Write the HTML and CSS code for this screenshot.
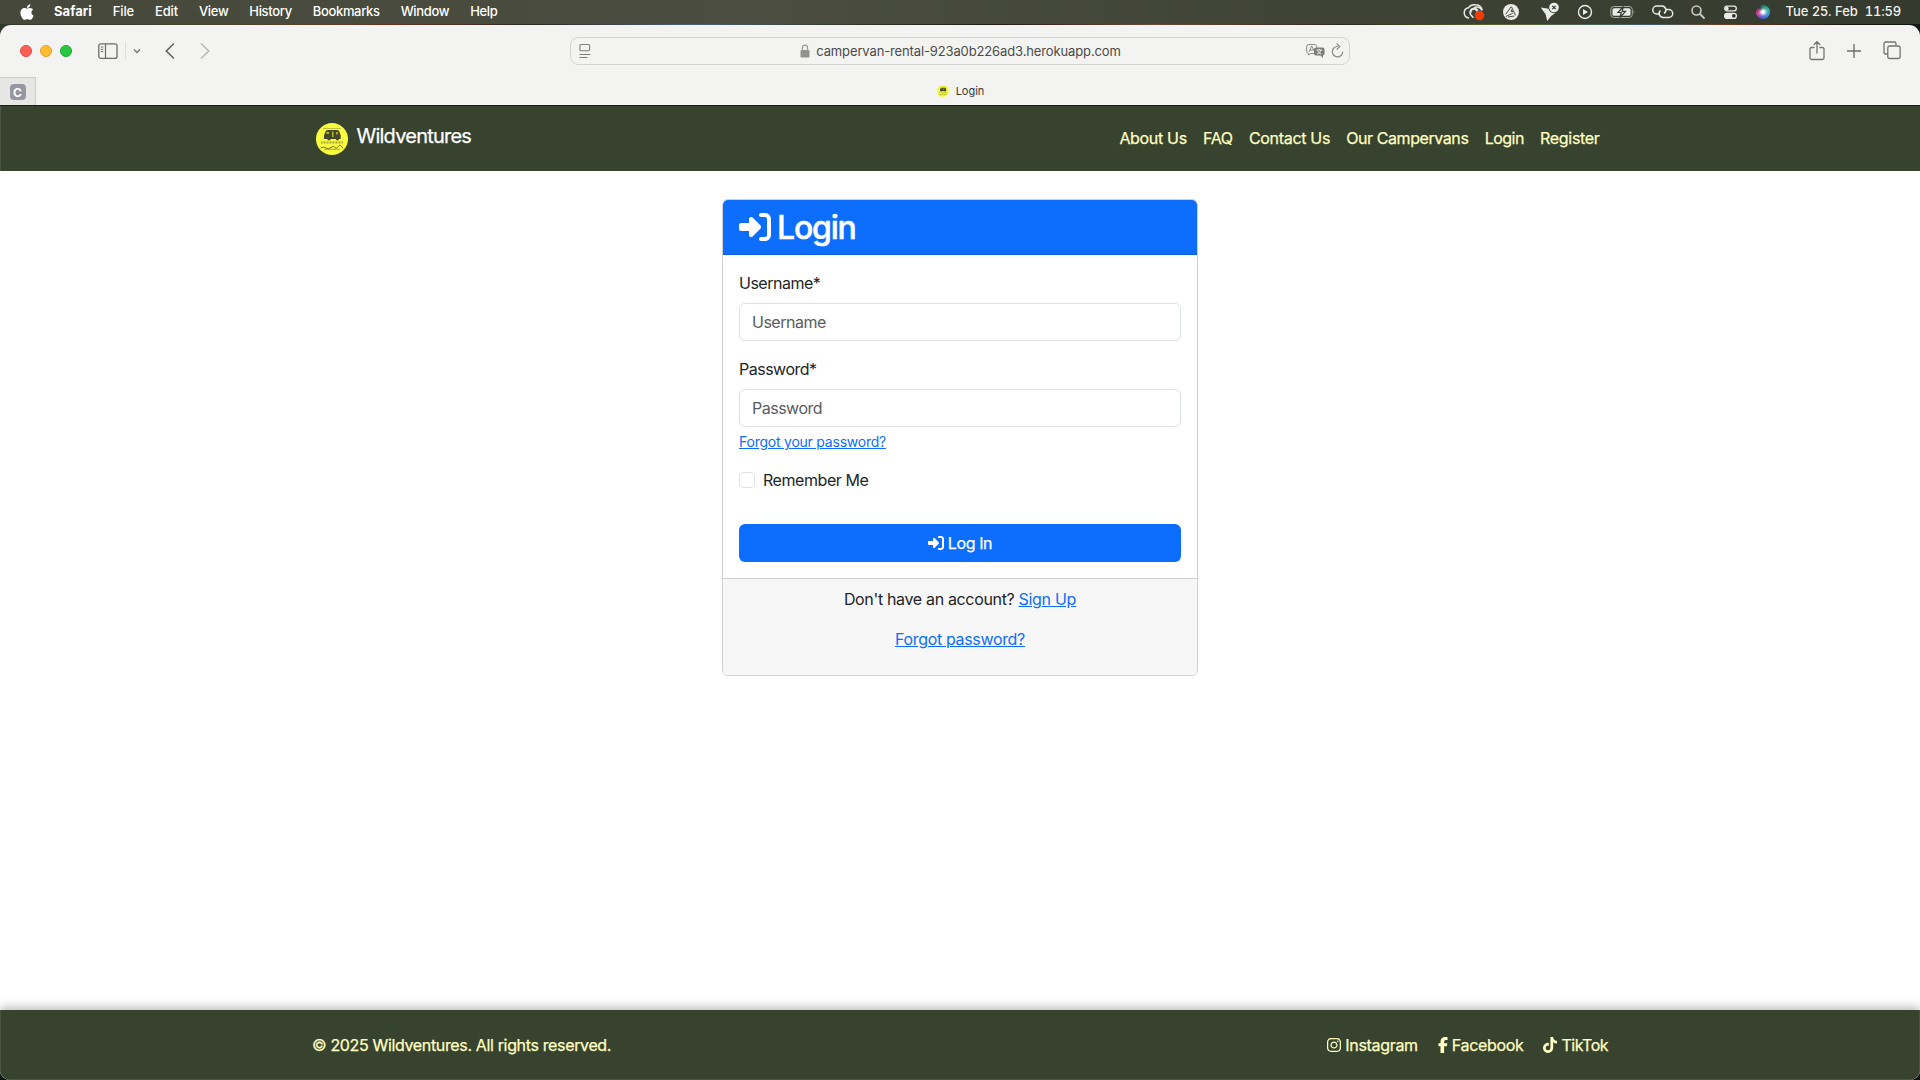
FILE: index.html
```html
<!DOCTYPE html>
<html lang="en">
<head>
<meta charset="utf-8">
<title>Login</title>
<link rel="stylesheet" href="styles.css">
</head>
<body>
<svg class="defs" width="0" height="0" aria-hidden="true">
  <symbol id="sign-in" viewBox="0 0 512 512"><path d="M217.9 105.9L340.7 228.7c7.2 7.2 11.3 17.1 11.3 27.3s-4.1 20.1-11.3 27.3L217.9 406.1c-6.4 6.4-15 9.9-24 9.9c-18.7 0-33.9-15.2-33.9-33.9l0-62.1L32 320c-17.7 0-32-14.3-32-32l0-64c0-17.7 14.3-32 32-32l128 0 0-62.1c0-18.7 15.2-33.9 33.9-33.9c9 0 17.6 3.6 24 9.9zM352 416l64 0c17.7 0 32-14.3 32-32l0-256c0-17.7-14.3-32-32-32l-64 0c-17.7 0-32-14.3-32-32s14.3-32 32-32l64 0c53 0 96 43 96 96l0 256c0 53-43 96-96 96l-64 0c-17.7 0-32-14.3-32-32s14.3-32 32-32z"/></symbol>
  <symbol id="van-logo" viewBox="0 0 32 32">
    <circle cx="16" cy="16" r="16" fill="#f9fb3f"/>
    <path d="M7 5.500h18" stroke="#a5a63a" stroke-width=".7"/>
    <path d="M9.500 8.500Q10 7 12 7h9q2 0 2.500 2l1.200 3.500v3.500h-1.500a1.800 1.800 0 0 1-3.500 0h-5a1.800 1.800 0 0 1-3.500 0H8v-3.500z" fill="#45482a"/>
    <path d="M10.500 9h2.500v2h-2.500zM16 8.500h1.500V14H16zM20 9h1.500l.6 2.200H20z" fill="#b5b73a"/>
    <path d="M5 19.500h22" stroke="#a3a53c" stroke-width="2.200" stroke-dasharray="1 .5"/>
    <path d="M5 25q3-2 5 0t5-.5 4 0 3-.8 5 1.500" stroke="#6a6d32" stroke-width="1" fill="none"/>
    <path d="M8 26.300h16" stroke="#8a8c38" stroke-width=".7"/>
  </symbol>
</svg>

<header class="menubar">
  <svg class="apple" viewBox="0 0 384 512"><path fill="#fff" d="M318.700 268.700c-.2-36.700 16.400-64.400 50-84.800-18.800-26.900-47.200-41.700-84.700-44.600-35.500-2.800-74.300 20.700-88.500 20.700-15 0-49.400-19.700-76.400-19.700C63.300 141.200 4 184.800 4 273.500q0 39.300 14.400 81.200c12.800 36.700 59 126.700 107.200 125.200 25.200-.6 43-17.900 75.800-17.900 31.800 0 48.300 17.900 76.400 17.900 48.600-.7 90.400-82.500 102.600-119.300-65.200-30.700-61.700-90-61.700-91.900zm-56.600-164.200c27.300-32.400 24.800-61.900 24-72.500-24.100 1.400-52 16.400-67.900 34.900-17.500 19.800-27.800 44.300-25.600 71.900 26.100 2 49.900-11.400 69.500-34.300z"/></svg>
  <nav class="menus">
    <span class="app">Safari</span><span>File</span><span>Edit</span><span>View</span><span>History</span><span>Bookmarks</span><span>Window</span><span>Help</span>
  </nav>
  <div class="status">
    <svg width="23" height="24" viewBox="0 0 23 24"><g fill="none" stroke="#e9e9e6" stroke-width="1.500"><path d="M6 18a5.200 5.200 0 0 1-.5-10.300A6.800 6.800 0 0 1 12 4.700c4 0 6.500 2.300 7.200 5.300"/><path d="M15 10.500a4 4 0 1 0-7.500 4l3 3.300"/><path d="M8 13a3 3 0 0 1 4.500-3.500l3.500 3.500"/><path d="M11 7.500c3-1.500 6.500 0 8 3"/></g><circle cx="16.500" cy="15.500" r="4.800" fill="#f23c07"/></svg>
    <svg width="20" height="24" viewBox="0 0 20 24"><circle cx="9" cy="12" r="8" fill="#ebebe8"/><path d="M3.800 14.200L9.200 6.500M3.800 16.500l7-3.300M9.600 7l3.900 8.300M6 17l6.200-.9" fill="none" stroke="#3b4034" stroke-width=".9"/><path d="M8.500 11.500l1.300-2.500 1.400 3.200z" fill="#3b4034"/></svg>
    <svg width="22" height="24" viewBox="0 0 22 24"><path d="M2.800 7.500l8 1.200q2 3.800 6.400 4.300l-4 3-4 5-1.500-6.500z" fill="#ebebe8"/><circle cx="16" cy="7.500" r="5.600" fill="#3d4236"/><circle cx="16" cy="7.500" r="4.800" fill="#ebebe8"/><path d="M14.300 5.800l3.400 3.400m0-3.400l-3.400 3.400" stroke="#33382c" stroke-width="1.200"/></svg>
    <svg width="18" height="24" viewBox="0 0 18 24"><circle cx="9" cy="12" r="6.500" fill="none" stroke="#ebebe8" stroke-width="1.400"/><path d="M7 9v6l5-3z" fill="#ebebe8"/></svg>
    <svg width="26" height="24" viewBox="0 0 26 24"><rect x=".8" y="6.500" width="21.500" height="11" rx="3" fill="none" stroke="#a9aba4"/><rect x="2.500" y="8.200" width="18" height="7.600" rx="1.600" fill="#ebebe8"/><path d="M13.300 6.500L8 12.500h3.200l-1.200 5 5.500-6.200h-3.300z" fill="#ebebe8" stroke="#33382c" stroke-width="1.200"/><path d="M23.700 10.300q1.500 1.700 0 3.400z" fill="#a9aba4"/></svg>
    <svg width="22" height="24" viewBox="0 0 22 24"><g fill="none" stroke="#ebebe8" stroke-width="1.500"><path d="M8 14H4.800a4 4 0 0 1 0-8H10a4 4 0 0 1 2 7.400"/><path d="M13.500 9.500h3.200a4 4 0 0 1 0 8H11a4 4 0 0 1-2.500-7"/></g></svg>
    <svg width="16" height="24" viewBox="0 0 16 24"><circle cx="6.500" cy="10.500" r="4.500" fill="none" stroke="#c9cac6" stroke-width="1.600"/><path d="M10 14l4 4" stroke="#c9cac6" stroke-width="1.800" stroke-linecap="round"/></svg>
    <svg width="17" height="24" viewBox="0 0 17 24"><rect x="2.700" y="6.200" width="11.600" height="4.600" rx="2.300" fill="none" stroke="#ebebe8" stroke-width="1.300"/><circle cx="4.900" cy="8.500" r="1.700" fill="#ebebe8"/><rect x="2" y="12.700" width="13" height="6.300" rx="3.100" fill="#ebebe8"/><circle cx="11.800" cy="15.850" r="1.900" fill="#33382c"/></svg>
    <span class="siri"></span>
    <time class="date">Tue 25. Feb</time><time class="clock">11:59</time>
  </div>
</header>

<div class="desktop">
<div class="window">
  <div class="toolbar">
    <div class="tools-left">
      <i class="light red"></i><i class="light yellow"></i><i class="light green"></i>
      <svg class="sidebar" width="20" height="18" viewBox="0 0 20 18" fill="none" stroke="#6c6c6a"><rect x=".8" y="1.800" width="18.200" height="14.600" rx="2" stroke-width="1.300"/><path d="M7.500 2v14.500" stroke-width="1.200"/><path d="M2.800 5h2.500M2.800 7.300h2.500M2.800 9.600h2.500" stroke-width="1"/></svg>
      <i class="rule"></i>
      <svg class="caret" width="8" height="6" viewBox="0 0 8 6" fill="none" stroke="#7c7c7a" stroke-width="1.500"><path d="M1 1.500L4 4.500l3-3"/></svg>
      <svg class="back" width="10" height="16" viewBox="0 0 10 16" fill="none" stroke="#5c5c5a" stroke-width="1.500" stroke-linecap="round" stroke-linejoin="round"><path d="M8.500 1L1.200 8l7.300 7"/></svg>
      <svg width="10" height="16" viewBox="0 0 10 16" fill="none" stroke="#b7b7b5" stroke-width="1.500" stroke-linecap="round" stroke-linejoin="round"><path d="M1.500 1l7.300 7-7.300 7"/></svg>
    </div>
    <div class="address">
      <svg width="12" height="16" viewBox="0 0 12 16" fill="none" stroke="#7d7d7b"><rect x=".9" y="1.500" width="9.700" height="6.200" rx="1.200" stroke-width="1.100"/><path d="M.4 11.500h11M.4 14.500h8"/></svg>
      <div class="url"><svg width="10" height="14" viewBox="0 0 10 14"><rect x=".5" y="6" width="9" height="7.500" rx="1.200" fill="#929290"/><path d="M2.400 7V4a2.600 2.800 0 0 1 5.200 0v3" fill="none" stroke="#9a9a98" stroke-width="1.200"/></svg><span>campervan-rental-923a0b226ad3.herokuapp.com</span></div>
      <div class="address-end">
        <svg width="19" height="16" viewBox="0 0 19 16"><path d="M8 10.500H4.500L2.500 12v-1.500Q.7 10 .7 8.500v-5q0-2 2-2h6q2 0 2 2v1" fill="none" stroke="#8a8a88"/><path d="M3 9l2.700-6 2.500 5M4 7h3.500" fill="none" stroke="#8a8a88" stroke-width="1"/><path d="M10 4.500h6.500q2 0 2 2v4q0 2-1.500 2V15l-2.500-2.500H10q-2 0-2-2v-4q0-2 2-2z" fill="#7c7c7a"/><path d="M10.500 7h5.500M13.200 5.800V7M11 11q3.500-1 4-4M11.500 7.500q1 3 4 3.500" stroke="#f3f3f1" stroke-width=".9" fill="none"/></svg>
        <svg width="13" height="16" viewBox="0 0 13 16" fill="none" stroke="#8a8a88" stroke-width="1.200" stroke-linecap="round"><path d="M6.500 3.500A5.200 5.200 0 1 0 11.700 9M6 .9l2.700 2.700L6 6.200"/></svg>
      </div>
    </div>
    <div class="tools-right">
      <svg width="16" height="22" viewBox="0 0 16 22" fill="none" stroke="#747472" stroke-width="1.300" stroke-linecap="round"><path d="M5 7.500H2.700q-1.700 0-1.700 1.700v8.600q0 1.700 1.700 1.700h10.600q1.700 0 1.700-1.700V9.200q0-1.700-1.700-1.700H11M8 13V2M5.200 4.500L8 1.700l2.800 2.800"/></svg>
      <svg width="14" height="22" viewBox="0 0 14 22" stroke="#6e6e6c" stroke-width="1.400"><path d="M0 11h14M7 4v14"/></svg>
      <svg width="18" height="22" viewBox="0 0 18 22" fill="none" stroke="#747472" stroke-width="1.300"><path d="M4.500 14H2.700Q1 14 1 12.300V3.700Q1 2 2.700 2h8.600Q13 2 13 3.700V5.500"/><rect x="4.800" y="6" width="12.300" height="12.500" rx="2"/></svg>
    </div>
  </div>
  <div class="tabs">
    <div class="pinned"><b>C</b></div>
    <div class="tab"><svg width="12" height="12"><use href="#van-logo"/></svg><span>Login</span></div>
  </div>

  <div class="page">
    <nav class="navbar">
      <div class="container">
        <a class="brand"><svg width="32" height="32"><use href="#van-logo"/></svg><span>Wildventures</span></a>
        <div class="links"><a>About Us</a><a>FAQ</a><a>Contact Us</a><a class="tight">Our Campervans</a><a class="tighter">Login</a><a>Register</a></div>
      </div>
    </nav>
    <main>
      <section class="card">
        <h2 class="card-header"><svg class="fa" width="32" height="32"><use href="#sign-in"/></svg><span>Login</span></h2>
        <form class="card-body">
          <label>Username*</label>
          <input class="control" type="text" placeholder="Username">
          <label>Password*</label>
          <input class="control pass" type="text" placeholder="Password">
          <a class="hint">Forgot your password?</a>
          <div class="check"><i class="box"></i><span>Remember Me</span></div>
          <button class="submit" type="button"><svg class="fa" width="16" height="16"><use href="#sign-in"/></svg><span>Log In</span></button>
        </form>
        <div class="card-footer">
          <p>Don't have an account? <a class="signup">Sign Up</a></p>
          <p><a>Forgot password?</a></p>
        </div>
      </section>
    </main>
    <footer class="footer">
      <div class="container">
        <span class="copyright">© 2025 Wildventures. All rights reserved.</span>
        <div class="social">
          <a><svg width="14" height="16" viewBox="0 0 448 512"><path d="M224.100 141c-63.600 0-114.900 51.300-114.900 114.900s51.300 114.900 114.900 114.900S339 319.500 339 255.900 287.700 141 224.100 141zm0 189.600c-41.100 0-74.700-33.500-74.700-74.700s33.500-74.700 74.700-74.700 74.700 33.500 74.700 74.700-33.600 74.700-74.700 74.700zm146.400-194.300c0 14.900-12 26.800-26.800 26.800-14.900 0-26.800-12-26.800-26.800s12-26.800 26.800-26.800 26.800 12 26.800 26.800zm76.100 27.200c-1.700-35.900-9.900-67.700-36.200-93.900-26.200-26.200-58-34.400-93.900-36.200-37-2.100-147.900-2.100-184.900 0-35.800 1.700-67.600 9.900-93.900 36.100s-34.400 58-36.200 93.900c-2.100 37-2.100 147.900 0 184.900 1.700 35.900 9.900 67.700 36.200 93.900s58 34.400 93.900 36.200c37 2.100 147.900 2.100 184.900 0 35.900-1.700 67.700-9.900 93.900-36.200 26.200-26.200 34.400-58 36.200-93.900 2.100-37 2.100-147.800 0-184.800zM398.800 388c-7.800 19.600-22.900 34.700-42.600 42.600-29.500 11.700-99.500 9-132.100 9s-102.700 2.600-132.100-9c-19.600-7.800-34.700-22.900-42.600-42.600-11.700-29.500-9-99.500-9-132.100s-2.600-102.700 9-132.100c7.800-19.600 22.900-34.700 42.600-42.600 29.500-11.700 99.500-9 132.100-9s102.700-2.600 132.100 9c19.600 7.800 34.700 22.900 42.600 42.600 11.700 29.500 9 99.500 9 132.100s2.700 102.700-9 132.100z"/></svg><span>Instagram</span></a>
          <a><svg width="10" height="16" viewBox="0 0 320 512"><path d="M80 299.300V512H196V299.300h86.500l18-97.800H196V166.900c0-51.700 20.300-71.500 72.700-71.500c16.300 0 29.400 .4 37 1.200V7.900C291.400 4 256.400 0 236.200 0C129.300 0 80 50.500 80 159.400v42.100H14v97.800H80z"/></svg><span>Facebook</span></a>
          <a><svg width="14" height="16" viewBox="0 0 448 512"><path d="M448,209.910a210.060,210.060,0,0,1-122.770-39.250V349.380A162.550,162.550,0,1,1,185,188.310V278.200a74.620,74.620,0,1,0,52.230,71.180V0l88,0a121.180,121.180,0,0,0,1.860,22.170h0A122.180,122.180,0,0,0,381,102.390a121.430,121.430,0,0,0,67,20.140Z"/></svg><span class="tighter">TikTok</span></a>
        </div>
      </div>
    </footer>
  </div>
</div>
</div>
</body>
</html>
```
FILE: styles.css
```css
* { box-sizing: border-box; }
body {
  margin: 0;
  width: 1920px;
  height: 1080px;
  overflow: hidden;
  background: #0b1712;
  font-family: Inter, "Liberation Sans", sans-serif;
  font-size: 16px;
  line-height: 24px;
  color: #212529;
}
.defs { display: block; }
svg, i { flex: none; display: block; }
span, time { white-space: nowrap; }

/* system menu bar */
.menubar {
  height: 24px;
  display: flex;
  align-items: center;
  padding: 0 19px 0 20px;
  background: linear-gradient(90deg, #45483a, #4a4d3f 40%, #3f4335 70%, #343a2e);
  color: #fff;
  font-size: 13px;
  font-weight: 500;
  line-height: 24px;
}
.apple { width: 14px; height: 18px; }
.menus { display: flex; gap: 21px; margin-left: 20px; padding-bottom: 2px; letter-spacing: -.15px; }
.menus .app { font-weight: 700; letter-spacing: .05px; }
.menus span:nth-child(n+4) { letter-spacing: -.34px; }
.status { display: flex; align-items: center; gap: 16px; margin-left: auto; color: #f0f0ee; }
.status time { padding-bottom: 2px; }
.siri {
  width: 14px;
  height: 14px;
  margin: 0 1px;
  border-radius: 50%;
  background:
    radial-gradient(circle at 50% 50%, #fff 0 12%, rgba(255,255,255,.3) 35%, transparent 55%),
    conic-gradient(#2d7f6b, #2fb7a8 20%, #3a7de0 40%, #5b4fd0 55%, #e0408a 72%, #35304a 90%, #2d7f6b);
}
.date { margin-left: -1px; }
.clock { margin-left: -9px; font-variant-numeric: tabular-nums; letter-spacing: -.2px; }

/* browser window */
.desktop {
  height: 1056px;
  padding-top: 1px;
  background: linear-gradient(90deg, #2c3a2a, #54442c 15%, #6d3023 20%, #2a2b22 28%, #4d6274 36%, #2b3722 45%, #241c14 52%, #6b4a38 60%, #2c2a1c 70%, #56652f 78%, #3f5c68 86%, #6e3c20 90%, #1a1712 96%, #101a14) top / 100% 20px no-repeat, #0b1712;
}
.window {
  height: 1055px;
  border-radius: 11px 11px 10px 10px;
  overflow: hidden;
  display: flex;
  flex-direction: column;
  background: #f3f3f1;
}
.toolbar {
  height: 52px;
  display: grid;
  grid-template-columns: 570px 780px 570px;
  align-items: center;
}
.tools-left { display: flex; align-items: center; padding-left: 20px; }
.light { width: 12px; height: 12px; border-radius: 50%; margin-right: 8px; border: 1px solid; }
.red { background: #ff5f57; border-color: #e2483f; }
.yellow { background: #febc2e; border-color: #e0a028; }
.green { background: #28c840; border-color: #1aa92e; }
.sidebar { margin-left: 18px; }
.rule { width: 1px; height: 18px; margin-left: 7px; background: #dededc; }
.caret { margin-left: 7px; }
.back { margin: 0 25px 0 24px; }
.address {
  height: 28px;
  border: 1px solid #d4d4d2;
  border-radius: 8px;
  display: flex;
  align-items: center;
  justify-content: space-between;
  padding: 0 5px 0 8px;
}
.url { display: flex; align-items: center; gap: 6px; font-size: 13px; color: #4b4b49; margin-left: 24px; letter-spacing: -.13px; }
.address-end { display: flex; gap: 6px; }
.tools-right { display: flex; align-items: center; justify-content: flex-end; padding-right: 19px; gap: 22px; }
.tabs { height: 29px; border-bottom: 1px solid #14200f; display: flex; }
.pinned {
  width: 36px;
  background: #e6e6e4;
  border: solid #cbcbc9;
  border-width: 1px 1px 0 0;
  display: flex;
  align-items: center;
  justify-content: center;
}
.pinned b { width: 16px; height: 16px; border-radius: 4px; background: #9697a3; color: #fff; font-size: 12px; line-height: 17px; text-align: center; }
.tab { flex: 1; display: flex; align-items: center; justify-content: center; gap: 7px; padding-right: 35px; font-size: 11px; color: #3a3a38; }

/* site */
.page { flex: 1; display: flex; flex-direction: column; background: #fff; }
.container { width: 1320px; margin: 0 auto; padding: 0 12px; display: flex; align-items: center; justify-content: space-between; }
.navbar, .footer { background: #38432f; color: #ffffc2; display: flex; align-items: center; -webkit-text-stroke: .25px; letter-spacing: -.32px; }
.navbar { height: 65px; border-left: 1px solid #4b5543; }
.brand { display: flex; align-items: center; gap: 9px; padding: 1px 0 0 3px; color: #fff; font-size: 20px; letter-spacing: -.77px; }
.brand span { padding-bottom: 7px; }
.links { display: flex; gap: 16.2px; padding: 0 9px 1px 0; }
.tight { letter-spacing: -.42px; }
.tighter { letter-spacing: -.5px; }
main { flex: 1; padding-top: 28px; }
.card { width: 476px; margin: 0 auto; border: 1px solid #d0d0d0; border-radius: 6px; overflow: hidden; letter-spacing: -.5px; }
.card-header {
  margin: 0;
  height: 55px;
  padding: 0 16px;
  display: flex;
  align-items: center;
  gap: 6px;
  background: #0d6efd;
  border-bottom: 1px solid #0b5fd9;
  color: #fff;
  font-size: 32px;
  font-weight: 500;
  letter-spacing: -1.2px;
  -webkit-text-stroke: .5px;
}
.card-header span { padding-top: 2px; }
.fa { fill: currentColor; }
.card-body { display: flex; flex-direction: column; align-items: flex-start; padding: 16px; }
.control {
  width: 100%;
  height: 38px;
  margin: 8px 0 16px;
  padding: 0 12px;
  border: 1px solid #dee2e6;
  border-radius: 6px;
  background: #fff;
  font: inherit;
  letter-spacing: inherit;
}
.control::placeholder { color: #595c5f; opacity: 1; }
.pass { margin-bottom: 4px; }
.card a { color: #0d6efd; text-decoration: underline; }
.card .hint { font-size: 14px; line-height: 21px; margin-bottom: 16px; letter-spacing: -.23px; }
.check { display: flex; align-items: center; gap: 8px; margin-bottom: 32px; letter-spacing: -.44px; }
.box { width: 16px; height: 16px; border: 1px solid #dee2e6; border-radius: 4px; }
.submit {
  width: 100%;
  height: 38px;
  border: 0;
  border-radius: 6px;
  background: #0d6efd;
  color: #fff;
  font: inherit;
  letter-spacing: -.4px;
  -webkit-text-stroke: .25px;
  display: flex;
  align-items: center;
  justify-content: center;
  gap: 4px;
}
.card-footer { border-top: 1px solid #cfcfcf; background: #f7f7f7; padding: 8px 16px; text-align: center; letter-spacing: -.34px; }
.card-footer p { margin: 0 0 16px; }
.card .signup { letter-spacing: -.3px; }
.footer {
  height: 70px;
  padding-top: 1px;
  border: solid #4b5543;
  border-width: 0 1px 1px;
  box-shadow: 0 -2px 10px rgba(0, 0, 0, .3);
}
.copyright { letter-spacing: -.35px; }
.social { display: flex; gap: 20px; }
.social a { display: flex; align-items: center; gap: 4px; }
.social svg { fill: currentColor; }
```
